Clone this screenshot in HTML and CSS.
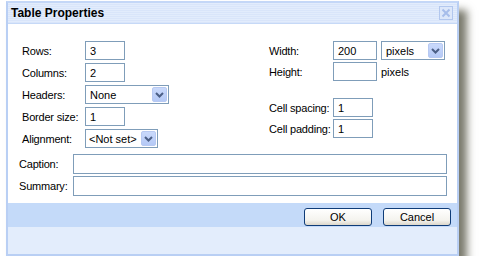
FILE: index.html
```html
<!DOCTYPE html>
<html>
<head>
  <title>Table Properties</title>
  <link rel="stylesheet" href="styles.css">
</head>
<body>

<div class="dialog">
  <div class="titlebar">
    <span class="title">Table Properties</span>
    <span class="close">
      <svg width="10" height="10" viewBox="0 0 10 10"><path d="M1.5 1.5 L8.5 8.5 M8.5 1.5 L1.5 8.5" stroke="#a6bdea" stroke-width="2" fill="none"/></svg>
    </span>
  </div>

  <div class="content">
    <div class="cols">
      <div class="col col-left">
        <div class="row"><label>Rows:</label><input class="num" type="text" value="3"></div>
        <div class="row"><label>Columns:</label><input class="num" type="text" value="2"></div>
        <div class="row"><label>Headers:</label>
          <div class="select sel-headers"><span>None</span><span class="arrow"><svg width="9" height="6" viewBox="0 0 9 6"><path d="M1 1 L4.5 4.5 L8 1" stroke="#4b5f86" stroke-width="2" fill="none"/></svg></span></div>
        </div>
        <div class="row"><label>Border size:</label><input class="num" type="text" value="1"></div>
        <div class="row"><label>Alignment:</label>
          <div class="select sel-align"><span>&lt;Not set&gt;</span><span class="arrow"><svg width="9" height="6" viewBox="0 0 9 6"><path d="M1 1 L4.5 4.5 L8 1" stroke="#4b5f86" stroke-width="2" fill="none"/></svg></span></div>
        </div>
      </div>

      <div class="col col-right">
        <div class="row"><label>Width:</label><input class="num wide-num" type="text" value="200">
          <div class="select sel-units"><span>pixels</span><span class="arrow"><svg width="9" height="6" viewBox="0 0 9 6"><path d="M1 1 L4.5 4.5 L8 1" stroke="#4b5f86" stroke-width="2" fill="none"/></svg></span></div>
        </div>
        <div class="row"><label>Height:</label><input class="num wide-num" type="text" value=""><span class="unit">pixels</span></div>
        <div class="row spaced"><label>Cell spacing:</label><input class="num" type="text" value="1"></div>
        <div class="row"><label>Cell padding:</label><input class="num" type="text" value="1"></div>
      </div>
    </div>

    <div class="line"><label>Caption:</label><input class="long" type="text" value=""></div>
    <div class="line"><label>Summary:</label><input class="long" type="text" value=""></div>
  </div>

  <div class="buttons">
    <button>OK</button>
    <button>Cancel</button>
  </div>
  <div class="band"></div>
</div>

</body>
</html>
```

FILE: styles.css
```css
body { margin: 0; background: #fff; font-family: "Liberation Sans", Arial, sans-serif; font-size: 11px; color: #000; }

.dialog { margin: 1px 0 0 6px; width: 449px; border: 2px solid #b9cff4; border-top-color: #c4d7f7; background: #fff; box-shadow: 8px 9px 8px rgba(50,50,30,0.65); }

.titlebar { height: 20px; display: flex; align-items: center; justify-content: space-between; padding: 0 4px 0 3px; border-bottom: 1px solid #c6d9f7; background: repeating-linear-gradient(#e2ecfc 0 1px, #d9e5fa 1px 2px); }
.title { font-weight: bold; font-size: 12px; color: #000; }
.close { width: 10px; height: 10px; padding: 1px; border: 1px solid #b2c7ee; background: #dce7fa; display: flex; }

.content { padding: 17px 10px 7px 11px; }
.cols { display: flex; padding-left: 3px; }
.col { display: flex; flex-direction: column; gap: 3px; }
.col-left { width: 247px; }
label { white-space: nowrap; flex-shrink: 0; letter-spacing: -0.2px; }
.col-left label { width: 63px; }
.col-right label { width: 64px; }
.row { display: flex; align-items: center; height: 19px; }
.col-right { gap: 2px; }
.col-right .row.spaced { margin-top: 15px; }

input { font-family: inherit; font-size: 11px; color: #000; box-sizing: border-box; border: 1px solid #7f9db9; padding: 0 4px; margin: 0; outline: none; background: #fff; }
.num { width: 40px; height: 19px; }
.wide-num { width: 44px; }
.unit { margin-left: 4px; }

.select { box-sizing: border-box; height: 19px; border: 1px solid #7f9db9; display: flex; align-items: center; justify-content: space-between; padding: 0 1px 0 4px; font-size: 11px; white-space: nowrap; flex-shrink: 0; }
.sel-headers { width: 84px; }
.sel-align { width: 73px; padding-left: 3px; }
.sel-units { width: 64px; margin-left: 4px; }
.arrow { width: 15px; height: 15px; flex-shrink: 0; box-sizing: border-box; border: 1px solid #b7c9f2; border-radius: 2px; background: linear-gradient(#c9d9fb, #b5c9f6); display: flex; align-items: center; justify-content: center; }

.line { display: flex; align-items: center; margin-top: 2px; }
.cols + .line { margin-top: 6px; }
.line label { width: 54px; }
.long { width: 374px; height: 20px; }

.buttons { height: 24px; background: #c4daf9; display: flex; justify-content: flex-end; align-items: flex-start; gap: 11px; padding: 5px 6px 0 0; box-sizing: border-box; }
button { width: 68px; height: 18px; font-family: inherit; font-size: 11px; color: #000; border: 1px solid #0f3c78; border-radius: 3px; background: linear-gradient(#ffffff, #f4f3ee 70%, #dcd7cb); padding: 0; }

.band { height: 27px; background: #e3edfc; }
```
